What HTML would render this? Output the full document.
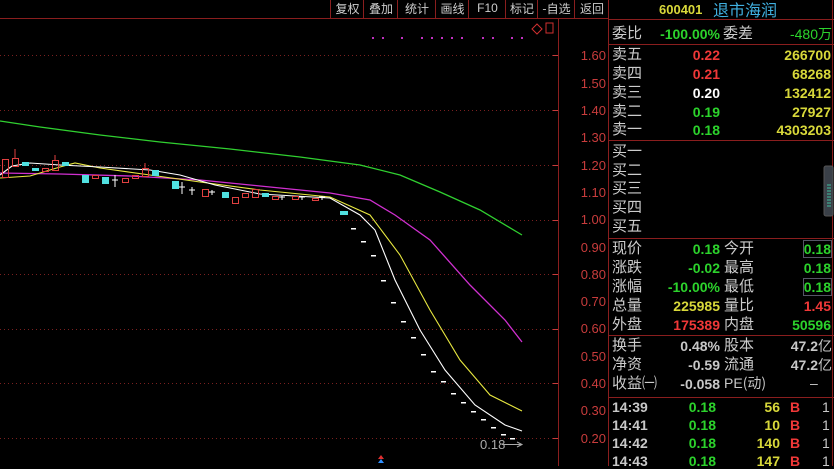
<!DOCTYPE html><html><head><meta charset="utf-8"><style>
*{margin:0;padding:0}body{width:834px;height:466px;background:#000;overflow:hidden;position:relative;font-family:"Liberation Sans","Noto Sans CJK SC",sans-serif}
.t{position:absolute;font-size:14px;line-height:16px;white-space:nowrap}
.cn{font-family:"Noto Sans CJK SC",sans-serif;font-size:15px;color:#ccc}
.r{text-align:right}
.y{color:#d8d83a}.g{color:#2cd32c}.rd{color:#f03838}.w{color:#fff}.gr{color:#c8c8c8}.ax{color:#c83c3c;font-size:13px}
.tb{position:absolute;top:0;height:18px;font-family:"Noto Sans CJK SC",sans-serif;font-size:12px;color:#ccc;line-height:17px;text-align:center;border-left:1px solid #8a1e1e}
</style></head><body>
<svg width="834" height="466" style="position:absolute;left:0;top:0">
<g stroke="#8a1e1e" stroke-width="1" fill="none">
<line x1="0" y1="18.5" x2="609" y2="18.5"/>
<line x1="558.5" y1="19" x2="558.5" y2="466"/>
<line x1="608.5" y1="0" x2="608.5" y2="466"/>
<line x1="609" y1="19.5" x2="834" y2="19.5"/>
<line x1="609" y1="44.5" x2="834" y2="44.5"/>
<line x1="609" y1="140.5" x2="834" y2="140.5"/>
<line x1="609" y1="238.5" x2="834" y2="238.5"/>
<line x1="609" y1="335.5" x2="834" y2="335.5"/>
<line x1="609" y1="397.5" x2="834" y2="397.5"/>
<line x1="832.5" y1="0" x2="832.5" y2="466"/>
</g>
<g stroke="#7a2020" stroke-dasharray="1,3">
<line x1="0" y1="55.5" x2="558" y2="55.5"/><line x1="0" y1="110.5" x2="558" y2="110.5"/>
<line x1="0" y1="165.5" x2="558" y2="165.5"/><line x1="0" y1="220.5" x2="558" y2="220.5"/>
<line x1="0" y1="274.5" x2="558" y2="274.5"/><line x1="0" y1="329.5" x2="558" y2="329.5"/>
<line x1="0" y1="383.5" x2="558" y2="383.5"/><line x1="0" y1="438.5" x2="558" y2="438.5"/>
</g>
<g stroke="#c83c3c"><line x1="553" y1="55.5" x2="558" y2="55.5"/><line x1="553" y1="110.5" x2="558" y2="110.5"/><line x1="553" y1="165.5" x2="558" y2="165.5"/><line x1="553" y1="220.5" x2="558" y2="220.5"/><line x1="553" y1="274.5" x2="558" y2="274.5"/><line x1="553" y1="329.5" x2="558" y2="329.5"/><line x1="553" y1="383.5" x2="558" y2="383.5"/><line x1="553" y1="438.5" x2="558" y2="438.5"/></g>
<g fill="#c030c0"><rect x="372" y="37" width="2" height="2"/><rect x="382" y="37" width="2" height="2"/><rect x="401" y="37" width="2" height="2"/><rect x="421" y="37" width="2" height="2"/><rect x="431" y="37" width="2" height="2"/><rect x="441" y="37" width="2" height="2"/><rect x="451" y="37" width="2" height="2"/><rect x="461" y="37" width="2" height="2"/><rect x="482" y="37" width="2" height="2"/><rect x="492" y="37" width="2" height="2"/><rect x="511" y="37" width="2" height="2"/><rect x="521" y="37" width="2" height="2"/></g>
<path d="M532 29 l5 -5 l5 5 l-5 5z" stroke="#d03030" fill="none"/><rect x="546" y="23" width="7" height="10" stroke="#d03030" fill="none"/>
<polyline fill="none" stroke="#30d030" stroke-width="1.3" points="0,121 40,127 100,135 160,142 230,149 300,157 360,165 400,175 440,192 480,210 522,235"/>
<polyline fill="none" stroke="#d030d0" stroke-width="1.3" points="0,173 60,174 130,176 200,180 260,186 330,193 370,200 395,215 430,240 470,285 505,320 522,342"/>
<polyline fill="none" stroke="#e8e840" stroke-width="1.1" points="0,178 30,176 60,167 75,163 100,168 150,175 200,182 260,190 330,197 370,215 400,255 430,310 460,360 490,395 510,405 522,411"/>
<polyline fill="none" stroke="#fff" stroke-width="1.1" points="0,175 12,166 30,163 60,165 100,167 150,170 180,175 215,185 260,194 330,198 360,215 375,230 395,280 420,330 445,370 475,405 505,425 522,431"/>
<g fill="none" stroke="#e04040">
<rect x="2.5" y="159.5" width="6" height="18"/><line x1="15" y1="149" x2="15" y2="158"/><rect x="12.5" y="158.5" width="6" height="8"/>
<rect x="42.5" y="168.5" width="6" height="3"/><rect x="52.5" y="160.5" width="6" height="10"/><line x1="55" y1="155" x2="55" y2="161"/>
<rect x="92.5" y="175.5" width="6" height="3"/><rect x="122.5" y="178.5" width="6" height="4"/><rect x="132.5" y="175.5" width="6" height="3"/>
<rect x="142.5" y="168.5" width="6" height="8"/><line x1="145" y1="163" x2="145" y2="169"/>
<rect x="202.5" y="189.5" width="6" height="7"/><rect x="232.5" y="197.5" width="6" height="6"/><rect x="242.5" y="193.5" width="6" height="4"/><rect x="252.5" y="189.5" width="6" height="8"/>
<rect x="272.5" y="196.5" width="6" height="3"/><rect x="292.5" y="196.5" width="6" height="3"/><rect x="312.5" y="198.5" width="6" height="2"/>
</g>
<g fill="#50e0e0">
<rect x="22" y="162" width="7" height="4"/><rect x="32" y="168" width="7" height="3"/><rect x="62" y="162" width="7" height="4"/><rect x="82" y="175" width="7" height="8"/><rect x="102" y="177" width="7" height="7"/>
<rect x="152" y="170" width="7" height="6"/><rect x="172" y="181" width="7" height="8"/><rect x="222" y="192" width="7" height="6"/><rect x="262" y="193" width="7" height="4"/><rect x="340" y="211" width="8" height="4"/>
</g>
<g stroke="#fff"><path d="M115 175v12M112 180h6M182 182v12M179 187h6M192 187v8M189 190h6M212 190v5M209 192h6M282 196v4M279 197h6M302 196v4M299 197h6M322 196v4M319 197h6"/></g>
<g fill="#fff"><rect x="351" y="228" width="5" height="1.5"/><rect x="361" y="241" width="5" height="1.5"/><rect x="371" y="255" width="5" height="1.5"/><rect x="381" y="280" width="5" height="1.5"/><rect x="391" y="302" width="5" height="1.5"/><rect x="401" y="321" width="5" height="1.5"/><rect x="411" y="337" width="5" height="1.5"/><rect x="421" y="354" width="5" height="1.5"/><rect x="431" y="371" width="5" height="1.5"/><rect x="441" y="381" width="5" height="1.5"/><rect x="451" y="393" width="5" height="1.5"/><rect x="461" y="402" width="5" height="1.5"/><rect x="471" y="411" width="5" height="1.5"/><rect x="481" y="419" width="5" height="1.5"/><rect x="491" y="427" width="5" height="1.5"/><rect x="501" y="434" width="5" height="1.5"/><rect x="510" y="438" width="5" height="1.5"/></g>
<path d="M502 444.5h20M517 442l5 2.5l-5 2.5" stroke="#aaa" fill="none"/>
<path d="M378 459l3-4l3 4z" fill="#e03030"/><path d="M378 463l3-4l3 4z" fill="#3090ff"/>
<rect x="824" y="166" width="9" height="50" rx="2" fill="#3a4048" stroke="#555"/>
<g stroke="#40c0a0"><path d="M827 185h4M827 188h4M827 191h4M827 194h4M827 197h4M827 200h4M827 203h4M827 206h4"/></g>
<g fill="none" stroke="#556"><rect x="803.5" y="240.5" width="28" height="17"/><rect x="803.5" y="278.5" width="28" height="17"/></g>
</svg>
<div class="tb" style="left:330px;width:33px">复权</div><div class="tb" style="left:363px;width:34px">叠加</div><div class="tb" style="left:397px;width:38px">统计</div><div class="tb" style="left:435px;width:33px">画线</div><div class="tb" style="left:468px;width:37px;font-family:'Liberation Sans'">F10</div><div class="tb" style="left:505px;width:32px">标记</div><div class="tb" style="left:537px;width:37px">-自选</div><div class="tb" style="left:574px;width:34px">返回</div>
<div class="t ax r" style="left:560px;width:46px;top:48px">1.60</div><div class="t ax r" style="left:560px;width:46px;top:76px">1.50</div><div class="t ax r" style="left:560px;width:46px;top:103px">1.40</div><div class="t ax r" style="left:560px;width:46px;top:130px">1.30</div><div class="t ax r" style="left:560px;width:46px;top:158px">1.20</div><div class="t ax r" style="left:560px;width:46px;top:185px">1.10</div><div class="t ax r" style="left:560px;width:46px;top:212px">1.00</div><div class="t ax r" style="left:560px;width:46px;top:240px">0.90</div><div class="t ax r" style="left:560px;width:46px;top:267px">0.80</div><div class="t ax r" style="left:560px;width:46px;top:294px">0.70</div><div class="t ax r" style="left:560px;width:46px;top:321px">0.60</div><div class="t ax r" style="left:560px;width:46px;top:349px">0.50</div><div class="t ax r" style="left:560px;width:46px;top:376px">0.40</div><div class="t ax r" style="left:560px;width:46px;top:403px">0.30</div><div class="t ax r" style="left:560px;width:46px;top:431px">0.20</div>
<div class="t" style="left:480px;top:437px;color:#aaa;font-size:13px">0.18</div>
<div class="t y" style="left:659px;top:2px;font-weight:bold;font-size:13px">600401</div><div class="t cn" style="left:713px;top:1px;color:#40b0e0;font-size:16px">退市海润</div>
<div class="t cn" style="left:612px;top:25px">委比</div><div class="t g r" style="left:645px;width:75px;top:26px;font-weight:bold">-100.00%</div><div class="t cn" style="left:723px;top:25px">委差</div><div class="t g r" style="left:770px;width:62px;top:26px">-480<span style="font-family:'Noto Sans CJK SC'">万</span></div>
<div class="t cn" style="left:612px;top:46px">卖五</div><div class="t rd r" style="left:650px;width:70px;top:47px;font-weight:bold">0.22</div><div class="t y r" style="left:760px;width:71px;top:47px;font-weight:bold">266700</div>
<div class="t cn" style="left:612px;top:65px">卖四</div><div class="t rd r" style="left:650px;width:70px;top:66px;font-weight:bold">0.21</div><div class="t y r" style="left:760px;width:71px;top:66px;font-weight:bold">68268</div>
<div class="t cn" style="left:612px;top:84px">卖三</div><div class="t w r" style="left:650px;width:70px;top:85px;font-weight:bold">0.20</div><div class="t y r" style="left:760px;width:71px;top:85px;font-weight:bold">132412</div>
<div class="t cn" style="left:612px;top:103px">卖二</div><div class="t g r" style="left:650px;width:70px;top:104px;font-weight:bold">0.19</div><div class="t y r" style="left:760px;width:71px;top:104px;font-weight:bold">27927</div>
<div class="t cn" style="left:612px;top:121px">卖一</div><div class="t g r" style="left:650px;width:70px;top:122px;font-weight:bold">0.18</div><div class="t y r" style="left:760px;width:71px;top:122px;font-weight:bold">4303203</div>
<div class="t cn" style="left:612px;top:143px">买一</div><div class="t cn" style="left:612px;top:162px">买二</div><div class="t cn" style="left:612px;top:180px">买三</div><div class="t cn" style="left:612px;top:199px">买四</div><div class="t cn" style="left:612px;top:218px">买五</div>
<div class="t cn" style="left:612px;top:240px">现价</div><div class="t g r" style="left:650px;width:70px;top:241px;font-weight:bold">0.18</div><div class="t cn" style="left:724px;top:240px">今开</div><div class="t g r" style="left:770px;width:61px;top:241px;font-weight:bold">0.18</div>
<div class="t cn" style="left:612px;top:259px">涨跌</div><div class="t g r" style="left:650px;width:70px;top:260px;font-weight:bold">-0.02</div><div class="t cn" style="left:724px;top:259px">最高</div><div class="t g r" style="left:770px;width:61px;top:260px;font-weight:bold">0.18</div>
<div class="t cn" style="left:612px;top:278px">涨幅</div><div class="t g r" style="left:640px;width:80px;top:279px;font-weight:bold">-10.00%</div><div class="t cn" style="left:724px;top:278px">最低</div><div class="t g r" style="left:770px;width:61px;top:279px;font-weight:bold">0.18</div>
<div class="t cn" style="left:612px;top:297px">总量</div><div class="t y r" style="left:650px;width:70px;top:298px;font-weight:bold">225985</div><div class="t cn" style="left:724px;top:297px">量比</div><div class="t rd r" style="left:770px;width:61px;top:298px;font-weight:bold">1.45</div>
<div class="t cn" style="left:612px;top:316px">外盘</div><div class="t rd r" style="left:650px;width:70px;top:317px;font-weight:bold">175389</div><div class="t cn" style="left:724px;top:316px">内盘</div><div class="t g r" style="left:770px;width:61px;top:317px;font-weight:bold">50596</div>
<div class="t cn" style="left:612px;top:337px">换手</div><div class="t gr r" style="left:650px;width:70px;top:338px;font-weight:bold">0.48%</div><div class="t cn" style="left:724px;top:337px">股本</div><div class="t gr r" style="left:770px;width:62px;top:338px;font-weight:bold">47.2<span style="font-family:'Noto Sans CJK SC';font-weight:normal">亿</span></div>
<div class="t cn" style="left:612px;top:356px">净资</div><div class="t gr r" style="left:650px;width:70px;top:357px;font-weight:bold">-0.59</div><div class="t cn" style="left:724px;top:356px">流通</div><div class="t gr r" style="left:770px;width:62px;top:357px;font-weight:bold">47.2<span style="font-family:'Noto Sans CJK SC';font-weight:normal">亿</span></div>
<div class="t cn" style="left:612px;top:375px">收益㈠</div><div class="t gr r" style="left:650px;width:70px;top:376px;font-weight:bold">-0.058</div><div class="t gr" style="left:724px;top:375px;font-size:14px">PE<span style="font-family:'Noto Sans CJK SC'">(动)</span></div><div class="t gr" style="left:810px;top:375px">–</div>
<div class="t gr" style="left:612px;top:399px;font-weight:bold">14:39</div><div class="t g r" style="left:650px;width:66px;top:399px;font-weight:bold">0.18</div><div class="t y r" style="left:740px;width:40px;top:399px;font-weight:bold">56</div><div class="t rd" style="left:790px;top:399px;font-weight:bold">B</div><div class="t gr" style="left:822px;top:399px">1</div>
<div class="t gr" style="left:612px;top:417px;font-weight:bold">14:41</div><div class="t g r" style="left:650px;width:66px;top:417px;font-weight:bold">0.18</div><div class="t y r" style="left:740px;width:40px;top:417px;font-weight:bold">10</div><div class="t rd" style="left:790px;top:417px;font-weight:bold">B</div><div class="t gr" style="left:822px;top:417px">1</div>
<div class="t gr" style="left:612px;top:435px;font-weight:bold">14:42</div><div class="t g r" style="left:650px;width:66px;top:435px;font-weight:bold">0.18</div><div class="t y r" style="left:740px;width:40px;top:435px;font-weight:bold">140</div><div class="t rd" style="left:790px;top:435px;font-weight:bold">B</div><div class="t gr" style="left:822px;top:435px">1</div>
<div class="t gr" style="left:612px;top:453px;font-weight:bold">14:43</div><div class="t g r" style="left:650px;width:66px;top:453px;font-weight:bold">0.18</div><div class="t y r" style="left:740px;width:40px;top:453px;font-weight:bold">147</div><div class="t rd" style="left:790px;top:453px;font-weight:bold">B</div><div class="t gr" style="left:822px;top:453px">1</div>
</body></html>
